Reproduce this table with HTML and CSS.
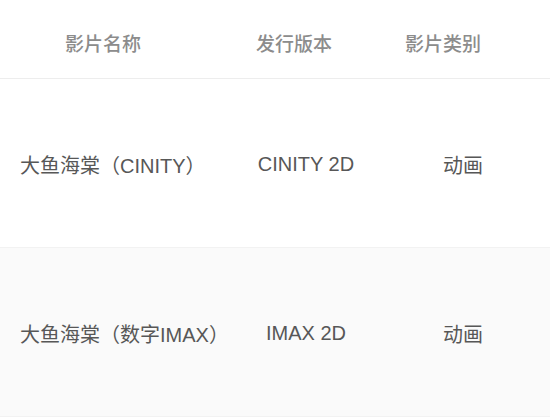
FILE: index.html
```html
<!DOCTYPE html>
<html lang="zh">
<head>
<meta charset="utf-8">
<link rel="stylesheet" href="styles.css">
</head>
<body>
<div class="table">
  <div class="head">
    <div class="h h1">影片名称</div>
    <div class="h h2">发行版本</div>
    <div class="h h3">影片类别</div>
  </div>
  <div class="row">
    <div class="c c1">大鱼海棠（CINITY）</div>
    <div class="c c2">CINITY 2D</div>
    <div class="c c3">动画</div>
  </div>
  <div class="row alt">
    <div class="c c1">大鱼海棠（数字IMAX）</div>
    <div class="c c2">IMAX 2D</div>
    <div class="c c3">动画</div>
  </div>
</div>
</body>
</html>
```
FILE: styles.css
```css
html, body {
  margin: 0;
  padding: 0;
  background: #fff;
}
body {
  width: 550px;
  height: 417px;
  overflow: hidden;
  font-family: "Liberation Sans", "Noto Sans CJK SC", sans-serif;
}
.head {
  display: grid;
  grid-template-columns: 206px 176px 122px 46px;
  height: 79px;
  align-items: center;
  border-bottom: 1px solid #ededed;
  box-sizing: border-box;
}
.h {
  text-align: center;
  font-family: "Noto Sans CJK SC", sans-serif;
  font-size: 19px;
  font-weight: 500;
  color: #8c8c8c;
  padding-top: 6px;
}
.row {
  display: grid;
  grid-template-columns: 206px 200px 114px 30px;
  height: 169px;
  align-items: center;
  background: #fff;
  border-bottom: 1px solid #f2f2f2;
  box-sizing: border-box;
}
.row.alt {
  background: #fafafa;
}
.c {
  font-size: 20px;
  color: #575757;
  white-space: nowrap;
  padding-top: 2px;
}
.c1 {
  padding-left: 20px;
}
.c2, .c3 {
  text-align: center;
}
```
